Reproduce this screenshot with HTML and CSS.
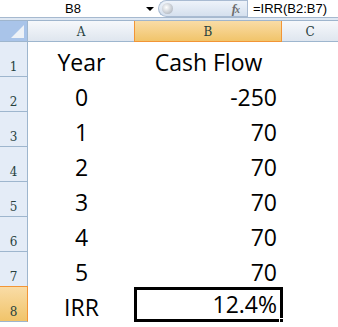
FILE: index.html
```html
<!DOCTYPE html>
<html lang="en">
<head>
  <meta charset="UTF-8" />
  <title>IRR</title>
  <link rel="stylesheet" href="styles.css">
</head>
<body>

  <div class="formula-bar">
    <div class="name-box">
      <span class="name">B8</span>
      <span class="arrow"></span>
    </div>
    <div class="fx-pill">
      <span class="knob"></span>
      <span class="fx"><i>f</i><i class="x">x</i></span>
    </div>
    <div class="formula">=IRR(B2:B7)</div>
  </div>
  <div class="bar-gap"></div>

  <div class="sheet">
    <div class="corner"><span class="tri"></span></div>
    <div class="col-head">A</div>
    <div class="col-head active">B</div>
    <div class="col-head last">C</div>

    <div class="row-head">1</div>
    <div class="cell center">Year</div>
    <div class="cell center">Cash Flow</div>
    <div class="cell"></div>

    <div class="row-head">2</div>
    <div class="cell center">0</div>
    <div class="cell right">-250</div>
    <div class="cell"></div>

    <div class="row-head">3</div>
    <div class="cell center">1</div>
    <div class="cell right">70</div>
    <div class="cell"></div>

    <div class="row-head">4</div>
    <div class="cell center">2</div>
    <div class="cell right">70</div>
    <div class="cell"></div>

    <div class="row-head">5</div>
    <div class="cell center">3</div>
    <div class="cell right">70</div>
    <div class="cell"></div>

    <div class="row-head">6</div>
    <div class="cell center">4</div>
    <div class="cell right">70</div>
    <div class="cell"></div>

    <div class="row-head">7</div>
    <div class="cell center">5</div>
    <div class="cell right">70</div>
    <div class="cell"></div>

    <div class="row-head active">8</div>
    <div class="cell center">IRR</div>
    <div class="cell right selected">12.4%<span class="handle"></span></div>
    <div class="cell"></div>
  </div>

</body>
</html>
```

FILE: styles.css
```css
* {
  box-sizing: border-box;
}

body {
  margin: 0;
  width: 338px;
  height: 327px;
  overflow: hidden;
  background: #fff;
  font-family: "Liberation Sans", Arial, sans-serif;
}

.formula-bar {
  display: flex;
  height: 18px;
  background: #fff;
  border-bottom: 1px solid #a6b9cf;
}

.name-box {
  width: 158px;
  display: flex;
  align-items: center;
}

.name {
  font-size: 13px;
  color: #000;
  width: 146px;
  text-align: center;
}

.arrow {
  width: 0;
  height: 0;
  border-left: 4px solid transparent;
  border-right: 4px solid transparent;
  border-top: 4px solid #000;
}

.fx-pill {
  width: 89px;
  height: 17px;
  display: flex;
  align-items: center;
  justify-content: space-between;
  background: linear-gradient(#eef3fa, #d5e0ee);
  border: 1px solid #a9bbd2;
  border-right: none;
  border-radius: 9px 0 0 9px;
  padding: 0 8px 0 3px;
}

.knob {
  width: 11px;
  height: 11px;
  border-radius: 50%;
  background: radial-gradient(circle at 40% 40%, #ffffff, #c4c9d0 60%, #9aa2ad);
}

.fx {
  font-family: "Liberation Serif", serif;
  font-size: 13px;
  color: #6d6d6d;
  font-weight: bold;
  letter-spacing: -1px;
}

.fx .x {
  font-size: 10px;
}

.formula {
  flex: 1;
  font-size: 13px;
  color: #000;
  padding-left: 5px;
  display: flex;
  align-items: center;
  border-left: 1px solid #a9bbd2;
}

.bar-gap {
  height: 3px;
  background: #dfe8f3;
  border-bottom: 1px solid #9fb5cd;
}

.sheet {
  display: grid;
  grid-template-columns: 28px 107px 147px 56px;
  grid-template-rows: 21px repeat(8, 35px);
}

.corner {
  background: #a9c4e9;
  border-right: 1px solid #9eb6ce;
  border-bottom: 1px solid #9eb6ce;
  position: relative;
}

.tri {
  position: absolute;
  right: 3px;
  bottom: 3px;
  width: 0;
  height: 0;
  border-left: 13px solid transparent;
  border-bottom: 13px solid #eef2f7;
}

.col-head {
  background: linear-gradient(#f6f8fb, #dfe6ef);
  border-right: 1px solid #9eb6ce;
  border-bottom: 1px solid #9eb6ce;
  font-family: "DejaVu Serif", serif;
  font-size: 12px;
  color: #27413e;
  display: flex;
  align-items: center;
  justify-content: center;
  padding-top: 2px;
}

.col-head.active {
  background: linear-gradient(#f9dca6, #f1c46a);
  border-right: 1px solid #f29536;
  border-left: 1px solid #f29536;
  border-bottom: 1px solid #f29536;
  margin-left: -1px;
}

.col-head.last {
  border-right: none;
}

.row-head {
  background: #e4ecf7;
  border-right: 1px solid #9eb6ce;
  border-bottom: 1px solid #9eb6ce;
  font-family: "DejaVu Serif", serif;
  font-size: 12px;
  color: #27413e;
  display: flex;
  align-items: flex-end;
  justify-content: center;
  padding-bottom: 2px;
}

.row-head.active {
  background: linear-gradient(#f9dca6, #f1c46a);
  border-right: 1px solid #f29536;
  border-top: 1px solid #f29536;
  margin-top: -1px;
}

.cell {
  font-family: "Open Sans", sans-serif;
  font-size: 23px;
  color: #000;
  display: flex;
  align-items: flex-end;
  line-height: 30px;
}

.cell.center {
  justify-content: center;
}

.cell.right {
  justify-content: flex-end;
  padding-right: 5px;
}

.cell.selected {
  border: 3px solid #000;
  margin-left: -1px;
  margin-right: -1px;
  padding-right: 3px;
  position: relative;
}

.handle {
  position: absolute;
  right: -4px;
  bottom: -4px;
  width: 5px;
  height: 5px;
  background: #000;
  border: 1px solid #fff;
}
```
